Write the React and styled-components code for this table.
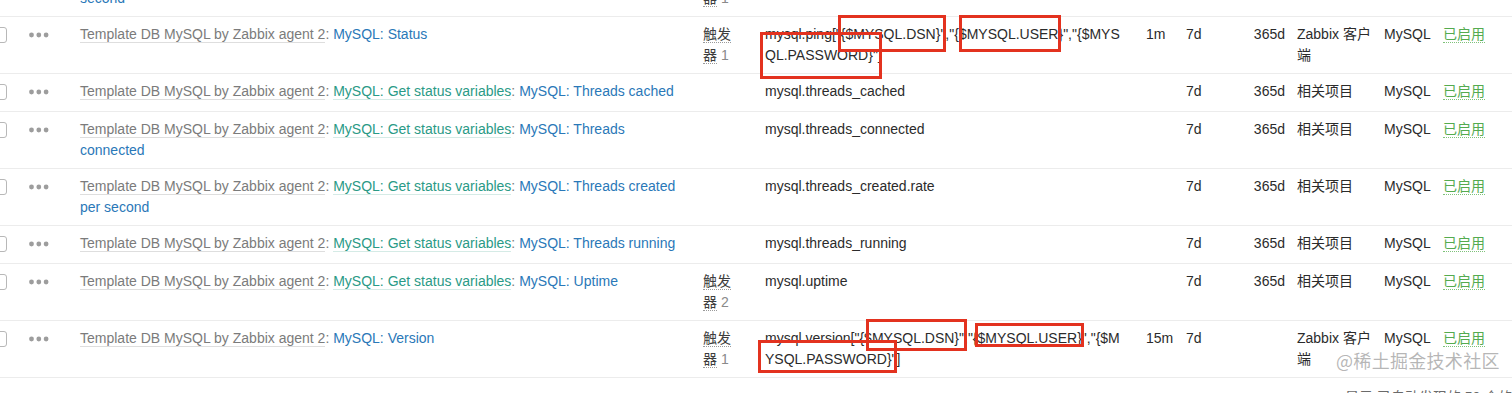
import React from 'react';
import styled, { createGlobalStyle } from 'styled-components';

const GlobalStyle = createGlobalStyle`
  html, body {
    margin: 0;
    padding: 0;
    background: #fff;
    overflow: hidden;
  }
  body {
    font-family: "Liberation Sans", Arial, "Noto Sans CJK SC", sans-serif;
    font-size: 14px;
    color: #2b2b2b;
  }
`;

const Page = styled.div`
  position: relative;
  width: 1512px;
  height: 393px;
  overflow: hidden;
`;

const List = styled.div`
  margin-top: -40px;
  margin-left: -9px;
  width: 1532px;
`;

const Row = styled.div`
  display: flex;
  align-items: flex-start;
  min-height: 38px;
  box-sizing: border-box;
  border-bottom: 1px solid #ececec;
`;

const Cell = styled.div`
  flex: 0 0 ${(p) => p.$w}px;
  box-sizing: border-box;
  padding: 7px ${(p) => p.$pr || 0}px 7px 0;
  line-height: 21px;
  text-align: ${(p) => p.$align || 'left'};
  word-break: ${(p) => (p.$breakAll ? 'break-all' : 'normal')};
`;

const Check = styled.span`
  display: block;
  width: 16px;
  height: 16px;
  margin-top: 3px;
  box-sizing: border-box;
  border: 1px solid #b8b8b8;
  border-radius: 3px;
  background: #fff;
`;

const Dots = styled.svg`
  display: block;
  margin-top: 8px;
`;

const Template = styled.span`
  color: #7b7b7b;
  border-bottom: 1px solid #dedede;
`;

const Sep = styled.span`
  color: #7b7b7b;
`;

const Master = styled.span`
  color: #2a9a86;
  border-bottom: 1px solid #d5ebe6;
`;

const ItemLink = styled.span`
  color: #2a78b8;
`;

const Trigger = styled.span`
  color: #3d3d3d;
  border-bottom: 1px dotted #9a9a9a;
`;

const Count = styled.span`
  color: #8a8a8a;
`;

const Status = styled.span`
  color: #54ab4f;
  border-bottom: 1px dotted #7fc27a;
`;

const Footer = styled.div`
  padding: 9px 0 0 1354px;
  color: #6a6a6a;
  line-height: 21px;
  white-space: nowrap;
`;

const Mark = styled.div`
  position: absolute;
  left: ${(p) => p.$x}px;
  top: ${(p) => p.$y}px;
  width: ${(p) => p.$w}px;
  height: ${(p) => p.$h}px;
  box-sizing: border-box;
  border: 3px solid #e3321f;
  pointer-events: none;
`;

const Watermark = styled.div`
  position: absolute;
  left: 1336px;
  top: 347px;
  font-family: "Noto Sans CJK SC", sans-serif;
  font-size: 18px;
  line-height: 26px;
  color: rgba(110, 110, 110, 0.5);
  letter-spacing: 0.3px;
  text-shadow: 0 0 1px rgba(255, 255, 255, 0.8);
`;

const rows = [
  { master: true, item: 'MySQL: Slow queries per second', trig: 1, key: 'mysql.slow_queries.rate', hist: '7d', trend: '365d', type: '相关项目' },
  { item: 'MySQL: Status', trig: 1, key: 'mysql.ping["{$MYSQL.DSN}","{$MYSQL.USER}","{$MYSQL.PASSWORD}"]', interval: '1m', hist: '7d', trend: '365d', type: 'Zabbix 客户端' },
  { master: true, item: 'MySQL: Threads cached', key: 'mysql.threads_cached', hist: '7d', trend: '365d', type: '相关项目' },
  { master: true, item: 'MySQL: Threads connected', key: 'mysql.threads_connected', hist: '7d', trend: '365d', type: '相关项目' },
  { master: true, item: 'MySQL: Threads created per second', key: 'mysql.threads_created.rate', hist: '7d', trend: '365d', type: '相关项目' },
  { master: true, item: 'MySQL: Threads running', key: 'mysql.threads_running', hist: '7d', trend: '365d', type: '相关项目' },
  { master: true, item: 'MySQL: Uptime', trig: 2, key: 'mysql.uptime', hist: '7d', trend: '365d', type: '相关项目' },
  { item: 'MySQL: Version', trig: 1, key: 'mysql.version["{$MYSQL.DSN}","{$MYSQL.USER}","{$MYSQL.PASSWORD}"]', interval: '15m', hist: '7d', trend: '', type: 'Zabbix 客户端' },
];

const marks = [
  { x: 838, y: 15, w: 108, h: 37 },
  { x: 959, y: 15, w: 102, h: 37 },
  { x: 760, y: 32, w: 122, h: 47 },
  { x: 866, y: 319, w: 101, h: 32 },
  { x: 975, y: 323, w: 109, h: 24 },
  { x: 758, y: 340, w: 139, h: 33 },
];

const MenuDots = () => (
  <Dots width="20" height="6" viewBox="0 0 20 6">
    <circle cx="2.5" cy="3" r="2.4" fill="#9d9d9d" />
    <circle cx="9.8" cy="3" r="2.4" fill="#9d9d9d" />
    <circle cx="17.1" cy="3" r="2.4" fill="#9d9d9d" />
  </Dots>
);

export default function App() {
  return (
    <Page>
      <GlobalStyle />
      <List>
        {rows.map((r, i) => (
          <Row key={i}>
            <Cell $w={38}><Check /></Cell>
            <Cell $w={51}><MenuDots /></Cell>
            <Cell $w={623} $pr={15}>
              <Template>Template DB MySQL by Zabbix agent 2</Template>
              <Sep>: </Sep>
              {r.master && (
                <>
                  <Master>MySQL: Get status variables</Master>
                  <Sep>: </Sep>
                </>
              )}
              <ItemLink>{r.item}</ItemLink>
            </Cell>
            <Cell $w={62} $pr={32}>
              {r.trig && (
                <>
                  <Trigger>触发器</Trigger> <Count>{r.trig}</Count>
                </>
              )}
            </Cell>
            <Cell $w={381} $pr={17} $breakAll>{r.key}</Cell>
            <Cell $w={40}>{r.interval}</Cell>
            <Cell $w={44}>{r.hist}</Cell>
            <Cell $w={67} $pr={12} $align="right">{r.trend}</Cell>
            <Cell $w={87} $pr={9}>{r.type}</Cell>
            <Cell $w={59}>MySQL</Cell>
            <Cell $w={80}><Status>已启用</Status></Cell>
          </Row>
        ))}
        <Footer>显示 已自动发现的 50 个的 50</Footer>
      </List>
      {marks.map((m, i) => (
        <Mark key={i} $x={m.x} $y={m.y} $w={m.w} $h={m.h} />
      ))}
      <Watermark>@稀土掘金技术社区</Watermark>
    </Page>
  );
}
